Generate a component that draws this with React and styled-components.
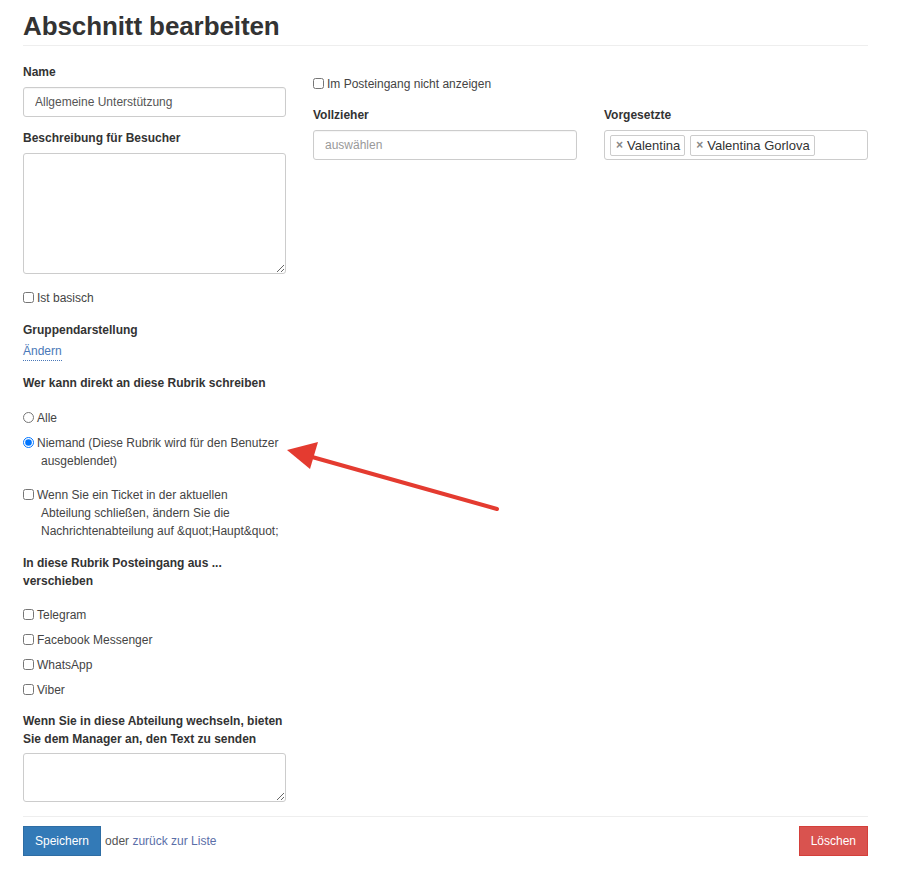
import React from "react";
import styled, { createGlobalStyle } from "styled-components";

const Global = createGlobalStyle`
  body {
    margin: 0;
    background: #fff;
    font-family: "Liberation Sans", Arial, sans-serif;
    font-size: 12px;
    color: #333;
  }
`;

const Page = styled.div`
  position: relative;
  width: 845px;
  padding: 10px 0 20px 23px;
`;

const Title = styled.h1`
  margin: 0;
  font-size: 26px;
  line-height: 32px;
  font-weight: bold;
  color: #333;
  letter-spacing: -0.1px;
`;

const Rule = styled.hr`
  border: 0;
  border-top: 1px solid #eee;
  margin: ${(p) => p.$top || 3}px 0 0;
`;

const Grid = styled.div`
  display: grid;
  grid-template-columns: 263px 1fr;
  gap: 27px;
`;

const Column = styled.div`
  display: flex;
  flex-direction: column;
  padding-top: ${(p) => p.$top || 0}px;
`;

const Pair = styled.div`
  display: grid;
  grid-template-columns: 1fr 1fr;
  gap: 27px;
  margin-top: 13px;
`;

const Label = styled.div`
  font-weight: bold;
  font-size: 12px;
  line-height: 18px;
  color: #333;
  white-space: nowrap;
  margin-top: ${(p) => p.$top || 0}px;
  margin-bottom: ${(p) => (p.$bottom === undefined ? 6 : p.$bottom)}px;
`;

const Input = styled.input`
  box-sizing: border-box;
  width: 100%;
  height: 30px;
  border: 1px solid #ccc;
  border-radius: 3px;
  padding: 0 11px;
  font-family: inherit;
  font-size: 12px;
  color: #555;
  box-shadow: inset 0 1px 1px rgba(0, 0, 0, 0.04);
  &::placeholder {
    color: #999;
  }
`;

const Area = styled.textarea`
  box-sizing: border-box;
  display: block;
  width: 100%;
  height: ${(p) => p.$h}px;
  border: 1px solid #ccc;
  border-radius: 3px;
  padding: 6px 11px;
  font-family: inherit;
  font-size: 12px;
  resize: vertical;
`;

const Check = styled.label`
  display: block;
  padding-left: 18px;
  text-indent: -18px;
  line-height: 18px;
  font-size: 12px;
  color: #444;
  white-space: nowrap;
  margin-top: ${(p) => p.$top || 0}px;
  input {
    width: 11px;
    height: 11px;
    margin: 0 3px 0 0;
    vertical-align: -1px;
    text-indent: 0;
  }
`;

const Link = styled.a`
  align-self: flex-start;
  color: #4a78b8;
  text-decoration: none;
  line-height: 17px;
  border-bottom: 1px dotted #4a78b8;
  margin-top: 4px;
  font-size: 12px;
`;

const Tags = styled.div`
  box-sizing: border-box;
  height: 30px;
  border: 1px solid #ccc;
  border-radius: 3px;
  display: flex;
  align-items: center;
  gap: 5px;
  padding: 0 5px;
`;

const Tag = styled.span`
  border: 1px solid #ccc;
  border-radius: 2px;
  height: 19px;
  line-height: 19px;
  padding: 0 4px 0 5px;
  font-size: 13px;
  color: #333;
  display: flex;
  align-items: center;
  gap: 4px;
  b {
    color: #888;
    font-size: 12px;
  }
`;

const Footer = styled.div`
  display: flex;
  align-items: center;
  margin-top: 9px;
`;

const Button = styled.button`
  height: 30px;
  padding: 0 11px;
  border: 1px solid ${(p) => (p.$danger ? "#d43f3a" : "#2e6da4")};
  background: ${(p) => (p.$danger ? "#d9534f" : "#337ab7")};
  color: #fff;
  font-family: inherit;
  font-size: 12px;
  border-radius: 0;
  margin-left: ${(p) => (p.$danger ? "auto" : "0")};
`;

const Aside = styled.span`
  color: #555;
  margin-left: 4px;
  a {
    color: #5a6ea8;
    text-decoration: none;
  }
`;

const Arrow = styled.svg`
  position: absolute;
  left: 0;
  top: 0;
  pointer-events: none;
`;

const channels = ["Telegram", "Facebook Messenger", "WhatsApp", "Viber"];

export default function App() {
  return (
    <>
      <Global />
      <Page>
        <Title>Abschnitt bearbeiten</Title>
        <Rule />
        <Grid>
          <Column $top={17}>
            <Label>Name</Label>
            <Input defaultValue="Allgemeine Unterstützung" />
            <Label $top={12}>Beschreibung für Besucher</Label>
            <Area $h={121} />
            <Check $top={15}>
              <input type="checkbox" />Ist basisch
            </Check>
            <Label $top={14} $bottom={0}>Gruppendarstellung</Label>
            <Link href="#">Ändern</Link>
            <Label $top={13} $bottom={0}>Wer kann direkt an diese Rubrik schreiben</Label>
            <Check $top={17}>
              <input type="radio" name="w" />Alle
            </Check>
            <Check $top={7}>
              <input type="radio" name="w" defaultChecked />Niemand (Diese Rubrik wird für den Benutzer
              <br />
              ausgeblendet)
            </Check>
            <Check $top={16}>
              <input type="checkbox" />Wenn Sie ein Ticket in der aktuellen
              <br />
              Abteilung schließen, ändern Sie die
              <br />
              Nachrichtenabteilung auf &amp;quot;Haupt&amp;quot;
            </Check>
            <Label $top={14} $bottom={0}>
              In diese Rubrik Posteingang aus ...
              <br />
              verschieben
            </Label>
            {channels.map((c, i) => (
              <Check key={c} $top={i === 0 ? 16 : 7}>
                <input type="checkbox" />
                {c}
              </Check>
            ))}
            <Label $top={13} $bottom={5}>
              Wenn Sie in diese Abteilung wechseln, bieten
              <br />
              Sie dem Manager an, den Text zu senden
            </Label>
            <Area $h={49} />
          </Column>
          <Column $top={29}>
            <Check>
              <input type="checkbox" />Im Posteingang nicht anzeigen
            </Check>
            <Pair>
              <div>
                <Label>Vollzieher</Label>
                <Input placeholder="auswählen" />
              </div>
              <div>
                <Label>Vorgesetzte</Label>
                <Tags>
                  <Tag>
                    <b>×</b>Valentina
                  </Tag>
                  <Tag>
                    <b>×</b>Valentina Gorlova
                  </Tag>
                </Tags>
              </div>
            </Pair>
          </Column>
        </Grid>
        <Rule $top={14} />
        <Footer>
          <Button>Speichern</Button>
          <Aside>
            oder <a href="#">zurück zur Liste</a>
          </Aside>
          <Button $danger>Löschen</Button>
        </Footer>
        <Arrow width="898" height="872" viewBox="0 0 898 872">
          <line x1="497" y1="509" x2="305" y2="455" stroke="#e43b30" strokeWidth="4" strokeLinecap="round" />
          <polygon points="287,450 318,442 310,469" fill="#e43b30" />
        </Arrow>
      </Page>
    </>
  );
}
